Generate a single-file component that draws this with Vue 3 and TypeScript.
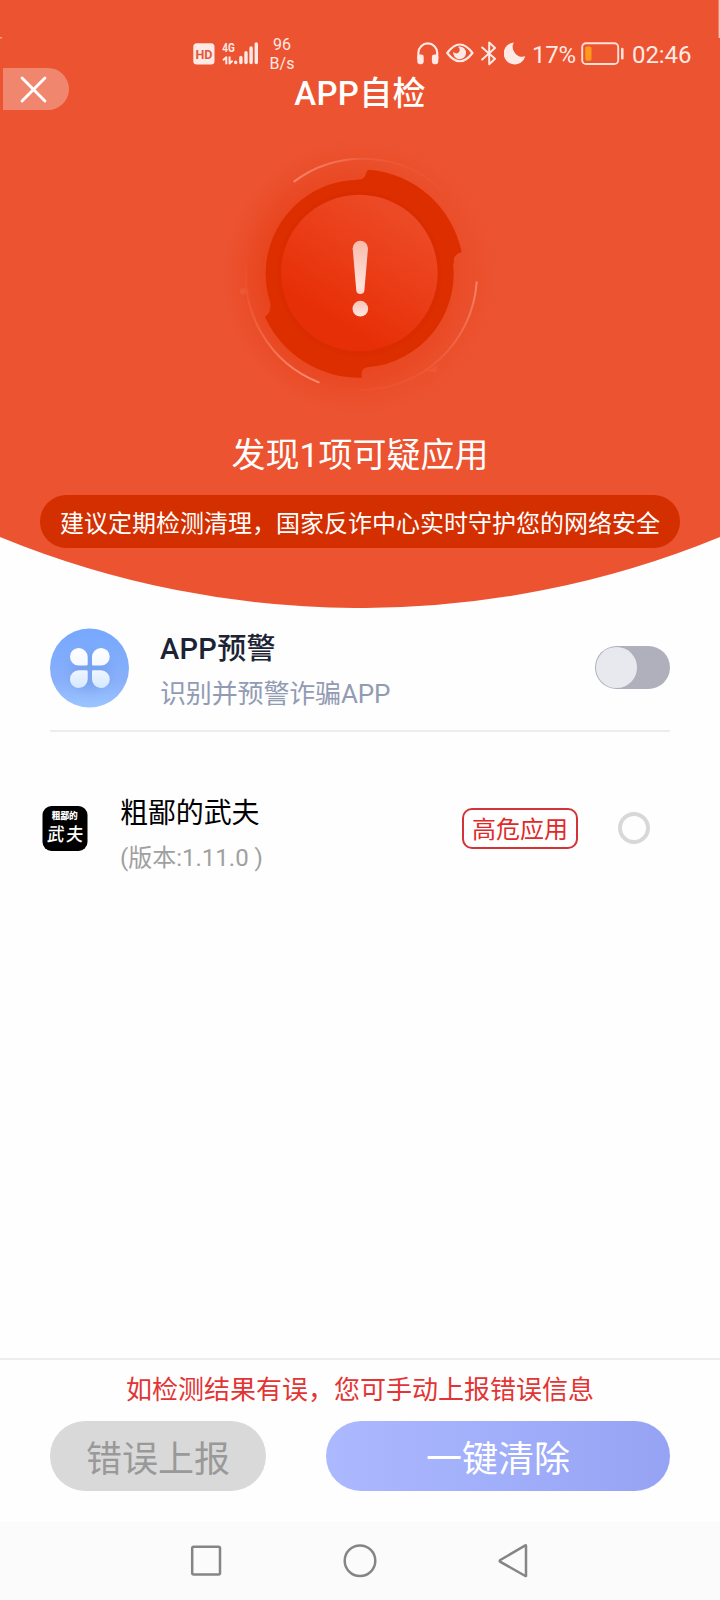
<script setup lang="ts">
import { ref } from 'vue'

interface DetectedApp {
  name: string
  version: string
  risk: string
  selected: boolean
}

const warningOn = ref(false)
const apps = ref<DetectedApp[]>([
  { name: '粗鄙的武夫', version: '1.11.0', risk: '高危应用', selected: false },
])
</script>

<template>
  <div class="screen">
    <section class="hero">
      <svg class="hero-bg" viewBox="0 0 720 608">
        <path d="M0 0H720V537A948 948 0 0 1 0 537Z" fill="#ec5330" />
        <path d="M719.3 0V38" stroke="#f8c5b8" stroke-width="1.4" />
        <path d="M0 37.7H2" stroke="#f49d87" stroke-width="1.4" />
      </svg>

      <div class="status">
        <svg class="hd" viewBox="0 0 22 22">
          <rect x="0.3" y="0.3" width="21.2" height="21.2" rx="3.5" fill="#ffe9e5" />
          <text x="10.9" y="15.8" text-anchor="middle" textLength="17" lengthAdjust="spacingAndGlyphs" class="hd-text">HD</text>
        </svg>
        <svg class="signal" viewBox="0 0 37 24">
          <text x="0.3" y="10.2" textLength="12.5" lengthAdjust="spacingAndGlyphs" class="net-text">4G</text>
          <g stroke="#ffe9e5" stroke-width="2" fill="none" stroke-linejoin="round">
            <path d="M4.3 22.2V15.2L1 18.2M7.6 14.4V21.6L10.6 18.6" />
          </g>
          <g stroke="#ffe9e5" stroke-width="3.4" stroke-linecap="round">
            <path d="M13.7 20.3V20.5M18.9 15.5V20.5M24 10.8V20.5M29.1 6V20.5M34.3 1.9V20.5" />
          </g>
        </svg>
        <div class="speed"><span>96</span><span>B/s</span></div>
        <svg class="phones" viewBox="0 0 22 23">
          <path d="M1.4 17V10.8a9.4 9.4 0 0 1 18.8 0V17" fill="none" stroke="#ffe9e5" stroke-width="2.2" />
          <rect x="0.3" y="12.4" width="6.4" height="9.8" rx="2.4" fill="#ffe9e5" />
          <rect x="14.9" y="12.4" width="6.4" height="9.8" rx="2.4" fill="#ffe9e5" />
        </svg>
        <svg class="eye" viewBox="0 0 28 20">
          <path d="M1.2 10Q13.8-7 26.5 10Q13.8 26.5 1.2 10Z" fill="none" stroke="#ffe9e5" stroke-width="2.2" stroke-linejoin="round" />
          <path d="M13.7 3.5A6.4 6.4 0 1 1 7.4 8.6A3.2 3.2 0 0 0 12.5 9.5A3.6 3.6 0 0 0 12 3.7Z" fill="#ffe9e5" />
        </svg>
        <svg class="bt" viewBox="0 0 16 25">
          <path d="M1.2 6.5L14 17.8L8.2 23.3V1.6L14 7L1.2 18.5" fill="none" stroke="#ffe9e5" stroke-width="2" stroke-linejoin="round" stroke-linecap="round" />
        </svg>
        <svg class="moon" viewBox="0 0 22 23">
          <path d="M9.8 0.5A11 11 0 1 0 21.3 14.3A9.8 9.8 0 0 1 9.8 0.5Z" fill="#ffe9e5" />
        </svg>
        <span class="pct">17%</span>
        <svg class="battery" viewBox="0 0 44 24">
          <rect x="1.2" y="1.2" width="36" height="20.8" rx="3.8" fill="none" stroke="#ffe0d9" stroke-width="1.9" />
          <rect x="4.3" y="4.5" width="6.2" height="14.2" rx="1.6" fill="#ff9a1c" />
          <path d="M41.3 7V16.2" stroke="#ffe0d9" stroke-width="2.6" stroke-linecap="round" />
        </svg>
        <span class="clock">02:46</span>
      </div>

      <header class="titlebar">
        <button class="close" aria-label="关闭">
          <svg viewBox="0 0 26 26">
            <path d="M2 2L24 24M24 2L2 24" stroke="#fff" stroke-width="2.8" stroke-linecap="round" />
          </svg>
        </button>
        <h1>APP自检</h1>
      </header>

      <svg class="alert" viewBox="0 0 900 870">
        <defs>
          <radialGradient id="glow" cx="450" cy="440" r="425" gradientUnits="userSpaceOnUse">
            <stop offset="0.6" stop-color="#e63f18" />
            <stop offset="0.76" stop-color="#e84620" stop-opacity="0.85" />
            <stop offset="0.9" stop-color="#ea4d29" stop-opacity="0.5" />
            <stop offset="1" stop-color="#ec5330" stop-opacity="0" />
          </radialGradient>
          <linearGradient id="haze" x1="0.2" y1="0.5" x2="0.8" y2="0.35">
            <stop offset="0" stop-color="#ec5330" stop-opacity="0.1" />
            <stop offset="1" stop-color="#ec5330" stop-opacity="0.55" />
          </linearGradient>
          <linearGradient id="disc" x1="0.76" y1="0.12" x2="0.34" y2="0.8">
            <stop offset="0" stop-color="#ec4a26" />
            <stop offset="0.5" stop-color="#ea3d17" />
            <stop offset="1" stop-color="#e72f07" />
          </linearGradient>
          <linearGradient id="mark" x1="0" y1="332" x2="0" y2="560" gradientUnits="userSpaceOnUse">
            <stop offset="0" stop-color="#f9b9aa" />
            <stop offset="0.6" stop-color="#fde3dc" />
            <stop offset="0.8" stop-color="#fac5b9" />
            <stop offset="1" stop-color="#fde7e2" />
          </linearGradient>
          <linearGradient id="arcTop" x1="250" y1="0" x2="700" y2="0" gradientUnits="userSpaceOnUse">
            <stop offset="0" stop-color="#f7866a" />
            <stop offset="0.36" stop-color="#f16a49" />
            <stop offset="0.45" stop-color="#ee5c39" />
            <stop offset="1" stop-color="#ee5935" stop-opacity="0.2" />
          </linearGradient>
          <linearGradient id="arcRight" x1="0" y1="455" x2="0" y2="785" gradientUnits="userSpaceOnUse">
            <stop offset="0" stop-color="#f4846a" />
            <stop offset="0.6" stop-color="#f06141" />
            <stop offset="1" stop-color="#ee5834" stop-opacity="0.4" />
          </linearGradient>
          <linearGradient id="arcLeft" x1="0" y1="390" x2="0" y2="757" gradientUnits="userSpaceOnUse">
            <stop offset="0" stop-color="#ee5733" stop-opacity="0.1" />
            <stop offset="0.6" stop-color="#f06443" />
            <stop offset="1" stop-color="#fa8c72" />
          </linearGradient>
        </defs>
        <circle cx="450" cy="440" r="425" fill="url(#glow)" />
        <circle cx="450" cy="440" r="425" fill="url(#haze)" />
        <g fill="none" stroke-width="6" stroke-linecap="round">
          <path d="M253 154A345 345 0 0 1 700 185" stroke="url(#arcTop)" />
          <path d="M800 457A348 348 0 0 1 450 780" stroke="url(#arcRight)" />
          <path d="M110 390A347 347 0 0 0 326 757" stroke="url(#arcLeft)" />
        </g>
        <g fill="#ed5734">
          <circle cx="99" cy="484" r="10" />
          <path d="M650 722L682 706L680 730Z" />
        </g>
        <g fill="#dd2e00">
          <circle cx="449" cy="431" r="282" />
          <path d="M449 431L440 149Q462 150 467 134Q470 121 478 119A312 312 0 0 1 755 366Q734 373 732 386L731 402Z" />
          <path d="M449 431L181 515Q186 545 165 561A312 312 0 0 0 455 743V730Q456 713 474 711Z" />
        </g>
        <circle cx="448" cy="431" r="247" fill="#d92a00" opacity="0.4" />
        <circle cx="448" cy="429" r="235" fill="url(#disc)" />
        <path d="M428 355A23 23 0 0 1 474 355L463 483Q461 492 451 492Q441 492 439 483Z" fill="url(#mark)" />
        <circle cx="451" cy="536" r="23.5" fill="url(#mark)" />
      </svg>

      <h2>发现1项可疑应用</h2>
      <p class="tip">建议定期检测清理，国家反诈中心实时守护您的网络安全</p>
    </section>

    <section class="warning">
      <svg class="warning-icon" viewBox="0 0 80 80">
        <defs>
          <linearGradient id="blue" x1="0" y1="0" x2="0" y2="1">
            <stop offset="0" stop-color="#76a8fe" />
            <stop offset="0.65" stop-color="#88affa" />
            <stop offset="1" stop-color="#9bc4ff" />
          </linearGradient>
          <linearGradient id="petal" x1="0" y1="19" x2="0" y2="60" gradientUnits="userSpaceOnUse">
            <stop offset="0" stop-color="#fff" />
            <stop offset="0.45" stop-color="#f4f9ff" />
            <stop offset="1" stop-color="#d6e8ff" />
          </linearGradient>
          <filter id="soft" x="-50%" y="-50%" width="200%" height="200%"><feGaussianBlur stdDeviation="4" /></filter>
        </defs>
        <circle cx="39.5" cy="40" r="39.5" fill="url(#blue)" />
        <rect x="21" y="24" width="38" height="38" rx="14" fill="#6b93e4" opacity="0.4" filter="url(#soft)" />
        <g fill="url(#petal)">
          <path d="M28.7 20A9 9 0 0 1 37.7 29V36.2Q37.7 37.5 36.4 37.5H28.7A8.75 8.75 0 0 1 28.7 20Z" />
          <path d="M51 20A8.75 8.75 0 0 1 51 37.5H43.3Q42 37.5 42 36.2V29A9 9 0 0 1 51 20Z" />
          <path d="M28.7 42.3H36.4Q37.7 42.3 37.7 43.6V51A8.9 8.9 0 1 1 28.7 42.3Z" />
          <path d="M43.3 42.3H51A8.9 8.9 0 1 1 42 51V43.6Q42 42.3 43.3 42.3Z" />
        </g>
      </svg>
      <div class="warning-copy">
        <strong>APP预警</strong>
        <span>识别并预警诈骗APP</span>
      </div>
      <button class="toggle" :class="{ on: warningOn }" aria-label="APP预警" @click="warningOn = !warningOn">
        <i></i>
      </button>
    </section>

    <ul class="apps">
      <li v-for="app in apps" :key="app.name">
        <svg class="app-icon" viewBox="0 0 45 45">
          <rect x="0.5" width="45" height="45" rx="9" fill="#000" />
          <text x="22.8" y="12.6" text-anchor="middle" textLength="26" lengthAdjust="spacingAndGlyphs" class="icon-small">粗鄙的</text>
          <g transform="translate(22.8 34.5) skewX(-6) scale(1 1.1)">
            <text text-anchor="middle" textLength="36" class="icon-big">武夫</text>
          </g>
        </svg>
        <div class="app-copy">
          <strong>{{ app.name }}</strong>
          <span>(版本:{{ app.version }} )</span>
        </div>
        <em>{{ app.risk }}</em>
        <button class="radio" :class="{ on: app.selected }" :aria-label="app.name" @click="app.selected = !app.selected"></button>
      </li>
    </ul>

    <footer class="actions">
      <p>如检测结果有误，您可手动上报错误信息</p>
      <div class="buttons">
        <button class="report">错误上报</button>
        <button class="clear">一键清除</button>
      </div>
    </footer>

    <nav class="sysnav">
      <svg viewBox="0 0 34 34"><rect x="3.2" y="2.8" width="27.8" height="27.8" rx="1.5" /></svg>
      <svg viewBox="0 0 34 34"><circle cx="17" cy="16.7" r="15.3" /></svg>
      <svg viewBox="0 0 34 34"><path d="M29 1.9V31.7Q29 32.3 28.3 32L3 17.6Q2.3 17 3 16.2L28.3 1.4Q29 1.1 29 1.9Z" /></svg>
    </nav>
  </div>
</template>

<style>
body {
  margin: 0;
  background: #fff;
}
</style>

<style scoped>
.screen {
  width: 720px;
  height: 1600px;
  display: flex;
  flex-direction: column;
  background: #fefefe;
  font-family: Roboto, "Noto Sans CJK SC", sans-serif;
  overflow: hidden;
}
.screen * {
  box-sizing: border-box;
}
button {
  border: 0;
  padding: 0;
  font-family: inherit;
}
svg {
  display: block;
  flex: none;
}
.hero {
  position: relative;
  height: 608px;
  flex: none;
  display: flex;
  flex-direction: column;
  align-items: center;
  color: #fff;
}
.hero > * {
  position: relative;
}
.hero > .hero-bg {
  position: absolute;
  inset: 0;
  width: 720px;
  height: 608px;
}
.status {
  width: 720px;
  height: 68px;
  padding: 38px 0 0 193px;
  display: flex;
  align-items: flex-start;
  color: #ffe9e5;
}
.hd {
  width: 22px;
  height: 22px;
  margin-top: 5px;
}
.hd-text {
  font: 700 13px Roboto, sans-serif;
  fill: #df5a3c;
}
.signal {
  width: 37px;
  height: 24px;
  margin: 4px 0 0 7px;
  overflow: visible;
}
.net-text {
  font: 700 12.5px Roboto, sans-serif;
  fill: #ffe9e5;
}
.speed {
  width: 26px;
  margin: -3px 0 0 10px;
  display: flex;
  flex-direction: column;
  align-items: center;
  font-size: 16px;
  line-height: 19px;
}
.phones {
  width: 22px;
  height: 23px;
  margin: 4px 0 0 122px;
}
.eye {
  width: 28px;
  height: 20px;
  margin: 5px 0 0 7px;
}
.bt {
  width: 16px;
  height: 25px;
  margin: 3px 0 0 7px;
}
.moon {
  width: 22px;
  height: 23px;
  margin: 4px 0 0 7px;
}
.pct,
.clock {
  font-size: 24px;
  line-height: 30px;
  margin-top: 2px;
  white-space: nowrap;
}
.pct {
  width: 45px;
  margin-left: 6px;
  letter-spacing: -0.2px;
}
.battery {
  width: 44px;
  height: 24px;
  margin: 4px 0 0 4px;
}
.clock {
  margin-left: 7px;
  letter-spacing: -0.1px;
}
.titlebar {
  width: 720px;
  height: 42px;
  padding: 0 3px;
  display: grid;
  grid-template-columns: 66px 1fr 66px;
}
.close {
  height: 42px;
  padding-left: 17px;
  border-radius: 0 21px 21px 0;
  background: #f1866e;
}
.close svg {
  width: 27px;
  height: 27px;
}
h1 {
  margin: 0;
  padding-top: 5px;
  text-align: center;
  font-size: 33px;
  line-height: 42px;
  font-weight: 500;
  letter-spacing: 0.3px;
}
.alert {
  width: 300px;
  height: 290px;
  margin-top: 20px;
}
h2 {
  margin: 10px 0 0;
  font-size: 34px;
  line-height: 50px;
  font-weight: 400;
}
.tip {
  width: 640px;
  height: 53px;
  margin: 15px 0 0;
  padding-top: 3px;
  border-radius: 27px;
  background: #d42f00;
  text-align: center;
  font-size: 24px;
  line-height: 53px;
  white-space: nowrap;
}
.warning {
  height: 124px;
  flex: none;
  margin: 0 50px;
  padding-top: 20px;
  border-bottom: 2px solid #ededed;
  display: flex;
  align-items: flex-start;
}
.warning-icon {
  width: 80px;
  height: 80px;
}
.warning-copy {
  flex: 1;
  margin-left: 30px;
  padding-top: 1px;
  display: flex;
  flex-direction: column;
}
.warning-copy strong {
  font-size: 29px;
  line-height: 40px;
  font-weight: 500;
  color: #1b2334;
  letter-spacing: 0.3px;
}
.warning-copy span {
  margin-top: 5px;
  font-size: 26px;
  line-height: 40px;
  font-weight: 400;
  color: #929bb4;
  letter-spacing: -0.15px;
}
.toggle {
  width: 75px;
  height: 43px;
  margin-top: 18px;
  padding: 1.2px;
  border-radius: 22px;
  background: #b0b0bd;
  display: flex;
}
.toggle.on {
  justify-content: flex-end;
  background: #76a8fe;
}
.toggle i {
  width: 40.6px;
  height: 40.6px;
  border-radius: 50%;
  background: #e8e9ee;
}
.apps {
  flex: 1;
  margin: 0;
  padding: 62px 70px 0 42px;
  list-style: none;
}
.apps li {
  display: flex;
  align-items: flex-start;
}
.app-icon {
  width: 45px;
  height: 45px;
  margin-top: 12px;
  overflow: visible;
}
.icon-small {
  font: 900 9px "Noto Sans CJK SC", sans-serif;
  fill: #fff;
}
.icon-big {
  font: 500 17px "Noto Sans CJK SC", sans-serif;
  fill: #fff;
}
.app-copy {
  flex: 1;
  margin-left: 33px;
  display: flex;
  flex-direction: column;
}
.app-copy strong {
  font-size: 28px;
  line-height: 40px;
  font-weight: 400;
  color: #000;
  letter-spacing: -0.1px;
}
.app-copy span {
  margin-top: 4px;
  font-size: 24px;
  line-height: 40px;
  color: #a0a0a0;
}
em {
  width: 116px;
  height: 41px;
  margin-top: 14px;
  padding-top: 1px;
  border: 2px solid #d03438;
  border-radius: 10px;
  text-align: center;
  font-style: normal;
  font-size: 24px;
  line-height: 39px;
  color: #e02a2a;
}
.radio {
  width: 32px;
  height: 32px;
  margin: 18px 0 0 40px;
  border: 4px solid #d8d8d8;
  border-radius: 50%;
  background: transparent;
}
.radio.on {
  background: #9ba8f6;
}
.actions {
  height: 164px;
  flex: none;
  border-top: 2px solid #ededed;
  padding: 10px 50px 0;
}
.actions p {
  margin: 0;
  text-align: center;
  font-size: 26px;
  line-height: 40px;
  color: #e33434;
}
.buttons {
  margin-top: 11px;
  display: flex;
  justify-content: space-between;
}
.buttons button {
  height: 70px;
  padding-top: 8px;
  border-radius: 35px;
  font-size: 36px;
  line-height: 62px;
}
.report {
  width: 216px;
  background: #d9d9d9;
  color: #999;
}
.clear {
  width: 344px;
  background: linear-gradient(90deg, #acb9ff, #96a3f4);
  color: #fff;
}
.sysnav {
  height: 78px;
  flex: none;
  padding: 22px 189px 0;
  background: #fbfbfb;
  display: flex;
  justify-content: space-between;
}
.sysnav svg {
  width: 34px;
  height: 34px;
  fill: none;
  stroke: #858585;
  stroke-width: 2.5;
}
</style>
